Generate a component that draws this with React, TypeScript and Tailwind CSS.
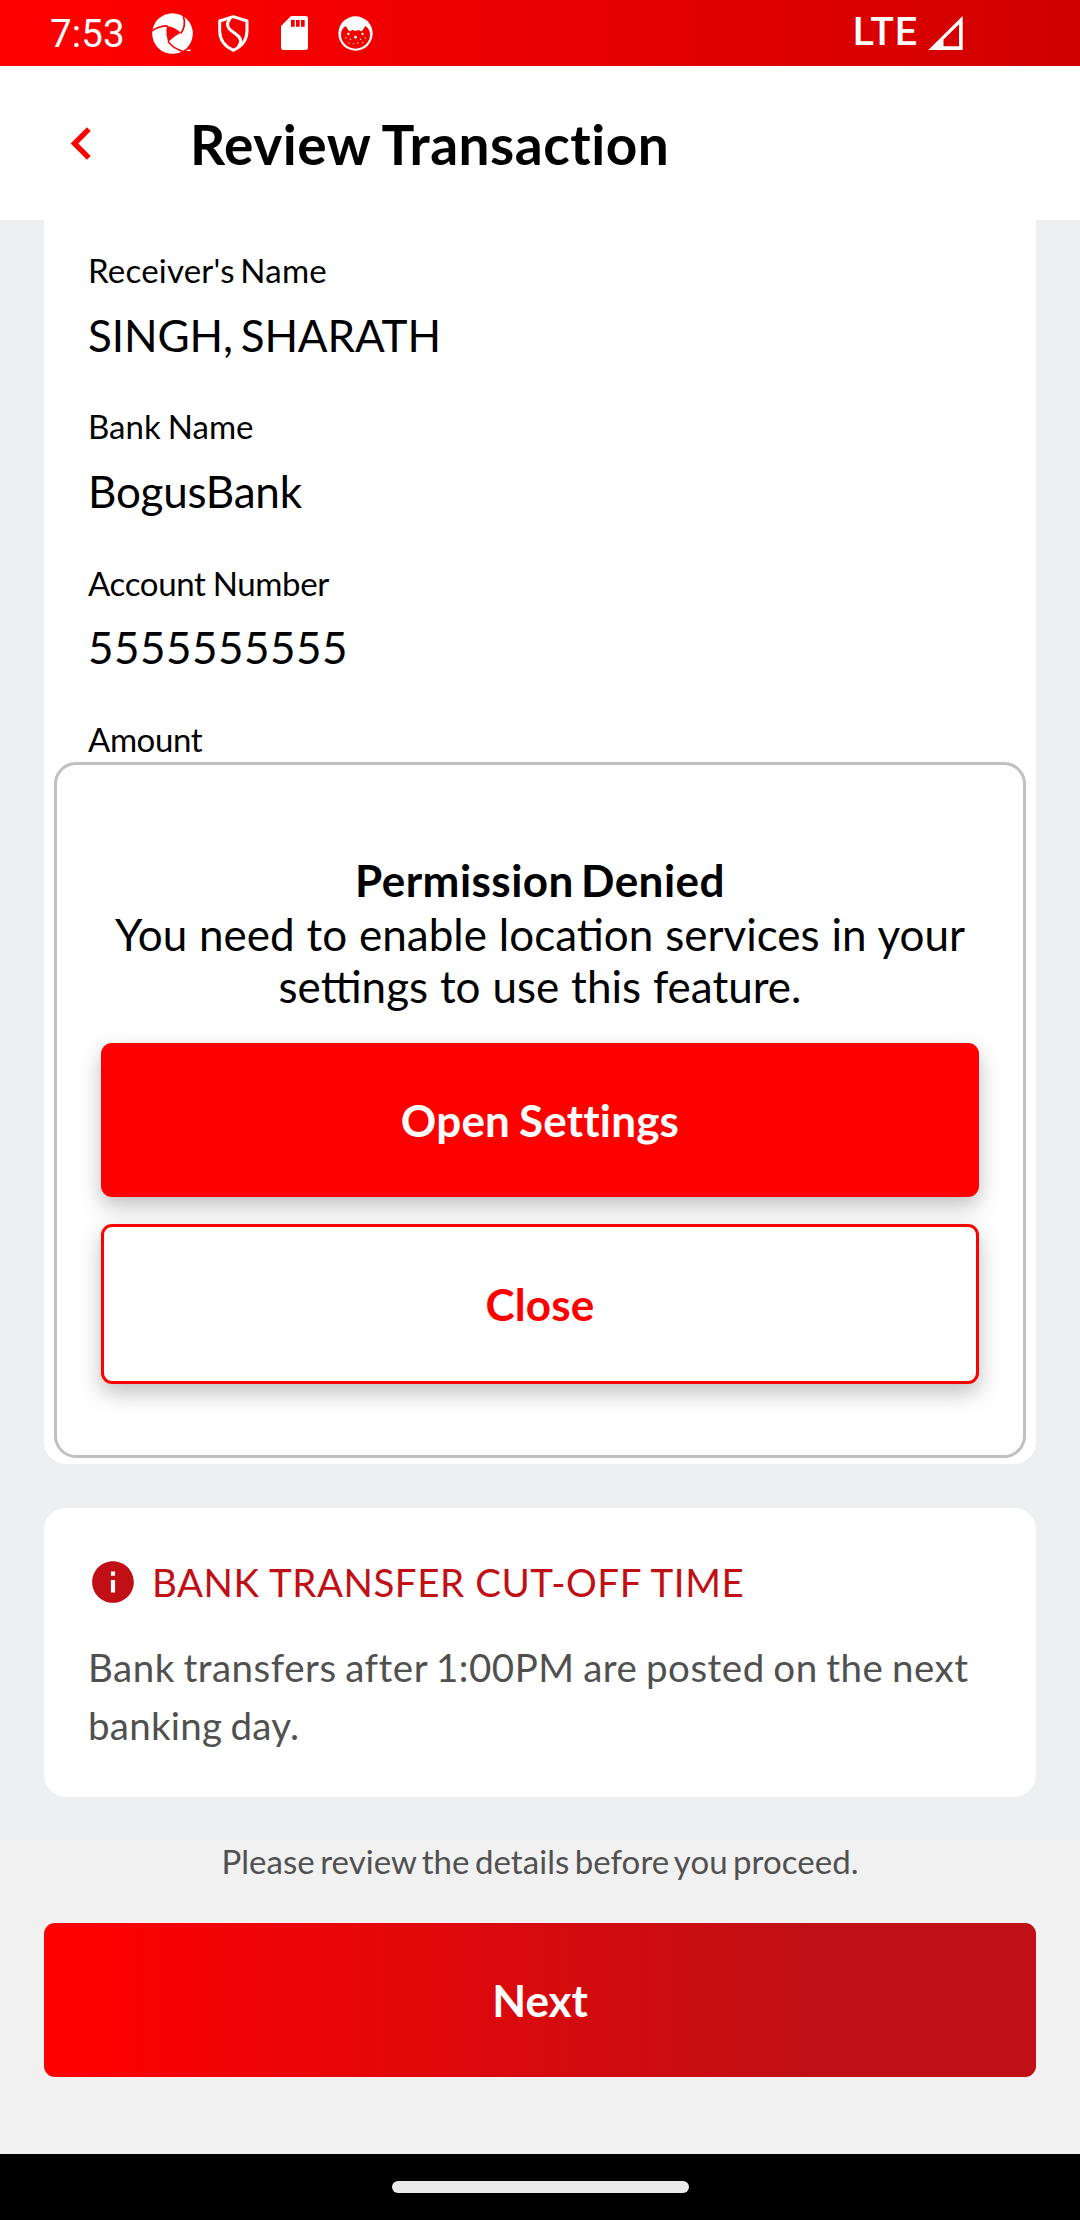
import { MdChevronLeft, MdInfo } from 'react-icons/md';

function SwirlIcon() {
  return (
    <svg viewBox="453 38 124 124" className="ml-[27px] h-[41px] w-[41px]">
      <circle cx="515" cy="100" r="61.5" fill="#fff" />
      <path d="M498 77Q522 80 541 98Q520 107 502 125Q494 100 498 77Z" fill="#fa0000" />
      <g fill="none" stroke="#fa0000" strokeWidth="5">
        <path d="M500 77Q472 77 450 94" />
        <path d="M540 100Q557 78 548 48" />
        <path d="M501 123Q516 146 552 156" />
      </g>
      <path d="M558 149h12v4h-12z" fill="#fff" />
    </svg>
  );
}

function ShieldIcon() {
  return (
    <svg viewBox="651 45 93 111" className="ml-[25px] h-[37px] w-[31px]" fill="none" stroke="#fff" strokeWidth="9" strokeLinejoin="round">
      <path d="M697 50L738 63V94Q737 133 697 151Q657 133 656 94V63Z" />
      <path d="M688 54Q672 74 686 88L708 105Q728 120 711 142" />
    </svg>
  );
}

function SdCardIcon() {
  return (
    <svg viewBox="840 48 81 102" className="ml-8 h-[34px] w-[27px]">
      <path
        fill="#fff"
        fillRule="evenodd"
        d="M870 48H914Q921 48 921 55V143Q921 150 914 150H847Q840 150 840 143V78ZM870 60V80H881V60ZM885 60V80H896V60ZM900 60V80H911V60Z"
      />
    </svg>
  );
}

function FaceIcon() {
  return (
    <svg viewBox="1011 48 104 104" className="ml-[30px] h-[35px] w-[35px]">
      <circle cx="1063" cy="100" r="51" fill="#fff" />
      <path d="M1020 104Q1019 88 1034 78L1042 90Q1048 97 1053 89Q1063 94 1073 89Q1078 97 1084 90L1092 78Q1107 88 1106 104A43 41 0 0 1 1020 104Z" fill="#f20000" />
      <g fill="#fff">
        <circle cx="1042" cy="101" r="3.5" />
        <circle cx="1084" cy="101" r="3.5" />
        <circle cx="1034" cy="113" r="2" />
        <circle cx="1048" cy="117" r="2" />
        <circle cx="1063" cy="111" r="4" />
        <circle cx="1078" cy="117" r="2" />
        <circle cx="1092" cy="113" r="2" />
        <circle cx="1044" cy="128" r="2" />
        <circle cx="1057" cy="130" r="2" />
        <circle cx="1070" cy="128" r="2" />
        <circle cx="1084" cy="127" r="2" />
      </g>
    </svg>
  );
}

function SignalIcon() {
  return (
    <svg viewBox="442 47 104 103" className="mr-[117px] ml-[10px] h-[34px] w-[35px]">
      <path fill="#fff" fillRule="evenodd" d="M442 150L546 47V150ZM488 118V139H535V72Z" />
    </svg>
  );
}

function StatusBar() {
  return (
    <div className="flex h-[66px] items-center bg-linear-to-r/srgb from-[#ff0000] from-5% to-[#d00000] pl-[50px] text-white">
      <span className="pt-0.5 font-[Roboto,sans-serif] text-[38.5px] leading-[46px] tracking-[0.1px]">7:53</span>
      <SwirlIcon />
      <ShieldIcon />
      <SdCardIcon />
      <FaceIcon />
      <span className="ml-auto pb-0.5 font-[Roboto,sans-serif] text-[39px] leading-[46px] font-medium tracking-[0.96px]">LTE</span>
      <SignalIcon />
    </div>
  );
}

function Field({ label, value, labelClass, valueClass }: { label: string; value?: string; labelClass: string; valueClass?: string }) {
  return (
    <div className="h-[156px]">
      <div className={`h-[59px] text-[33px] leading-10 ${labelClass}`}>{label}</div>
      {value && <div className={`text-[44px] leading-[53px] ${valueClass ?? ''}`}>{value}</div>}
    </div>
  );
}

function PermissionDialog() {
  return (
    <div
      role="dialog"
      className="absolute top-[762px] left-[54px] flex h-[696px] w-[972px] flex-col rounded-[22px] border-3 border-[#c0c0c0] bg-white px-11 pt-[88px] text-center text-[44px]"
    >
      <h2 className="leading-[54px] font-bold tracking-[0.47px] [word-spacing:-4px]">Permission Denied</h2>
      <p className="mt-px leading-[52px] [word-spacing:0.6px]">You need to enable location services in your settings to use this feature.</p>
      <button className="mt-[31px] h-[154px] rounded-[11px] bg-[#ff0000] leading-[53px] font-bold tracking-[0.2px] text-white shadow-[0_9px_22px_rgba(0,0,0,0.25)] [word-spacing:-2.1px]">
        Open Settings
      </button>
      <button className="mt-[27px] h-[160px] rounded-[11px] border-3 border-[#ff0000] bg-white leading-[53px] font-bold tracking-[0.17px] text-[#ff0000] shadow-[0_9px_22px_rgba(0,0,0,0.25)]">
        Close
      </button>
    </div>
  );
}

export default function App() {
  return (
    <div className="relative flex h-[2220px] w-[1080px] flex-col overflow-hidden bg-[#f1f1f1] font-[Lato,sans-serif] text-black">
      <StatusBar />
      <header className="flex h-[154px] items-center bg-white pl-[49px]">
        <MdChevronLeft className="size-[65px] text-[#ff0000]" />
        <h1 className="ml-[76px] pt-0.5 text-[55px] leading-[66px] font-bold tracking-[0.52px] [word-spacing:-1px]">Review Transaction</h1>
      </header>

      <main className="h-[1621px] overflow-hidden bg-[#eeeff1] px-11">
        <section className="-mt-4 h-[1260px] rounded-[22px] bg-white px-11 pt-[46px]">
          <Field label="Receiver's Name" value="SINGH, SHARATH" labelClass="tracking-[0.22px] [word-spacing:-3.1px]" valueClass="tracking-[-0.12px] [word-spacing:-3.3px]" />
          <Field label="Bank Name" value="BogusBank" labelClass="tracking-[0.01px] [word-spacing:-1.3px]" valueClass="tracking-[-0.2px]" />
          <Field label="Account Number" value="5555555555" labelClass="pt-px tracking-[-0.35px] [word-spacing:-0.9px]" valueClass="tracking-[0.48px]" />
          <Field label="Amount" labelClass="pt-px tracking-[-0.4px]" />
        </section>

        <section className="mt-11 h-[289px] rounded-[22px] bg-white px-11 pt-[49px]">
          <div className="flex items-center text-[#c01015]">
            <MdInfo className="size-[50px]" />
            <h2 className="ml-[14px] text-[38.5px] leading-[46px] tracking-[0.52px] [word-spacing:0.3px]">BANK TRANSFER CUT-OFF TIME</h2>
          </div>
          <p className="mt-[31px] text-[38.5px] leading-[58px] tracking-[0.25px] text-[#505050] [word-spacing:-1.8px] first-line:tracking-[0.52px]">
            Bank transfers after 1:00PM are posted on the next banking day.
          </p>
        </section>
      </main>

      <footer className="flex h-[313px] flex-col bg-[#f1f1f1] px-11">
        <p className="text-center text-[33px] leading-10 tracking-[0.05px] text-[#505050] [word-spacing:-3.1px]">Please review the details before you proceed.</p>
        <button className="mt-[42px] h-[154px] rounded-[11px] bg-linear-to-r/srgb from-[#ff0000] from-3% to-[#c01015] to-77% text-[44px] leading-[53px] font-bold tracking-[-0.1px] text-white">
          Next
        </button>
      </footer>

      <nav className="flex h-[66px] items-center justify-center bg-black">
        <div className="h-[11.5px] w-[297px] rounded-full bg-[#ebebeb]" />
      </nav>

      <PermissionDialog />
    </div>
  );
}
